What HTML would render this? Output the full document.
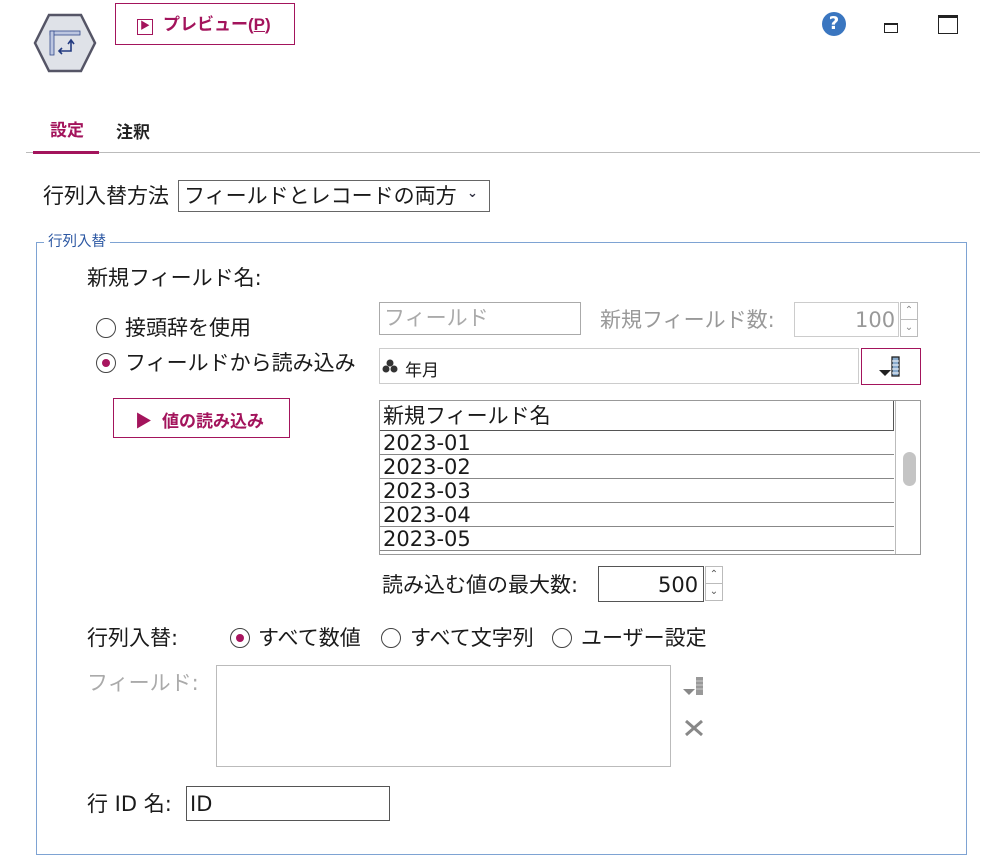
<!DOCTYPE html>
<html><head><meta charset="utf-8"><style>
body{margin:0;width:1000px;height:866px;background:#fff;position:relative;font-family:"DejaVu Sans","Noto Sans CJK JP",sans-serif;color:#1a1a1a;overflow:hidden}
.a{position:absolute;white-space:nowrap}
.t{font-size:21px;line-height:24px}
.g{color:#999}
.box{position:absolute;border:1px solid #aaa;background:#fff;box-sizing:border-box}
.rad{position:absolute;width:20px;height:20px;border:1.5px solid #444;border-radius:50%;box-sizing:border-box;background:#fff}
.rad.on::after{content:"";position:absolute;left:4.5px;top:4.5px;width:8px;height:8px;border-radius:50%;background:#a8155f}
.mag{color:#a3145c}
.spin{position:absolute;width:18px;border:1px solid #bbb;box-sizing:border-box;font-size:10px;color:#555;text-align:center;line-height:16px}
.row{position:absolute;left:0;width:514px;height:24px;border-bottom:1px solid #888;font-size:21px;line-height:24px;padding-left:3px;box-sizing:border-box}
</style></head><body>
<svg class="a" style="left:33px;top:13px" width="64" height="60" viewBox="0 0 64 60">
<polygon points="16,2 48,2 62,30 48,58 16,58 2,30" fill="#dfe2e8" stroke="#556" stroke-width="2.5"/>
<rect x="17" y="18" width="30" height="4" fill="#bcc6e0" stroke="#334a8a" stroke-width="0.8"/>
<rect x="17" y="18" width="4" height="24" fill="#bcc6e0" stroke="#334a8a" stroke-width="0.8"/>
<path d="M26 38h12v-10M35 31l3-4 3 4M29 35l-3 3 3 3" stroke="#223a80" stroke-width="1.6" fill="none"/>
</svg>
<div class="box" style="left:115px;top:3px;width:180px;height:42px;border:1.5px solid #a3145c"></div>
<div class="a mag" style="left:137px;top:14px;font-size:17px;font-weight:bold;line-height:22px;font-family:'Liberation Sans','Noto Sans CJK JP',sans-serif"><span style="display:inline-block;width:14px;height:14px;border:1.5px solid #a3145c;font-size:10px;line-height:14px;text-align:center;vertical-align:1px;margin-right:10px">▶</span>プレビュー(<u>P</u>)</div>
<div class="a" style="left:822px;top:12px;width:24px;height:24px;border-radius:50%;background:#3a76c0;color:#fff;font-weight:bold;font-size:18px;line-height:24px;text-align:center">?</div>
<div class="a" style="left:884px;top:23px;width:12px;height:7px;border:1.5px solid #222;border-top-width:2.5px"></div>
<div class="a" style="left:938px;top:15px;width:18px;height:15px;border:1.5px solid #222;border-top-width:3px"></div>
<div class="a mag" style="left:50px;top:116px;font-size:17px;font-weight:bold">設定</div>
<div class="a" style="left:116px;top:118px;font-size:17px;font-weight:bold;color:#222">注釈</div>
<div class="a" style="left:26px;top:152px;width:954px;height:1px;background:#bbb"></div>
<div class="a" style="left:33px;top:151px;width:66px;height:3px;background:#a3145c"></div>
<div class="a t" style="left:43px;top:184px">行列入替方法</div>
<div class="box" style="left:178px;top:180px;width:312px;height:32px;border-color:#666"></div>
<div class="a t" style="left:184px;top:184px">フィールドとレコードの両方</div>
<div class="a" style="left:467px;top:186px;font-size:13px;color:#334;font-weight:bold">⌄</div>
<div class="a" style="left:36px;top:242px;width:931px;height:613px;border:1px solid #7ea3d3;box-sizing:border-box"></div>
<div class="a" style="left:44px;top:233px;background:#fff;padding:0 4px;font-size:14.5px;color:#2d58a3;line-height:18px">行列入替</div>
<div class="a t" style="left:87px;top:266px">新規フィールド名:</div>
<div class="rad" style="left:96px;top:318px"></div>
<div class="a t" style="left:125px;top:316px">接頭辞を使用</div>
<div class="rad on" style="left:96px;top:353px"></div>
<div class="a t" style="left:125px;top:351px">フィールドから読み込み</div>
<div class="box" style="left:379px;top:302px;width:202px;height:33px"></div>
<div class="a t g" style="left:384px;top:306px;color:#aaa">フィールド</div>
<div class="a t g" style="left:600px;top:308px">新規フィールド数:</div>
<div class="box" style="left:794px;top:302px;width:105px;height:35px;border-color:#ccc"></div>
<div class="a t g" style="left:855px;top:308px;color:#999">100</div>
<div class="spin" style="left:900px;top:302px;height:18px;color:#888">⌃</div>
<div class="spin" style="left:900px;top:319px;height:18px;color:#888">⌄</div>
<div class="box" style="left:379px;top:348px;width:480px;height:36px;border-color:#ccc"></div>
<svg class="a" style="left:382px;top:359px" width="16" height="14"><circle cx="8" cy="4" r="3.5" fill="#333"/><circle cx="4" cy="10" r="3.5" fill="#333"/><circle cx="12" cy="10" r="3.5" fill="#333"/></svg>
<div class="a" style="left:405px;top:356px;font-size:17px">年月</div>
<div class="box" style="left:861px;top:348px;width:60px;height:37px;border:1.5px solid #a3145c"></div>
<svg class="a" style="left:878px;top:356px" width="26" height="22"><path d="M1 14h12l-6 6z" fill="#222"/><rect x="14" y="1" width="7" height="19" fill="#8ac" stroke="#222" stroke-width="1.3"/><path d="M14 5h7M14 9h7M14 13h7M14 17h7" stroke="#fff" stroke-width="1"/></svg>
<div class="box" style="left:113px;top:398px;width:177px;height:40px;border:1.5px solid #a3145c"></div>
<div class="a mag" style="left:135px;top:407px;font-size:17px;font-weight:bold;font-family:'Liberation Sans','Noto Sans CJK JP',sans-serif"><span style="margin-right:10px">▶</span>値の読み込み</div>
<div class="box" style="left:379px;top:400px;width:542px;height:155px;border-color:#999;overflow:hidden">
<div class="row" style="top:0;height:30px;border-bottom:1.5px solid #555;border-right:1px solid #555;line-height:30px">新規フィールド名</div>
<div class="row" style="top:30px">2023-01</div>
<div class="row" style="top:54px">2023-02</div>
<div class="row" style="top:78px">2023-03</div>
<div class="row" style="top:102px">2023-04</div>
<div class="row" style="top:126px">2023-05</div>
<div class="row" style="top:150px">2023-06</div>
<div style="position:absolute;left:515px;top:0;width:1px;height:155px;background:#bbb"></div>
<div style="position:absolute;left:523px;top:51px;width:13px;height:34px;border-radius:7px;background:#c4c4c4"></div>
</div>
<div class="a t" style="left:382px;top:573px">読み込む値の最大数:</div>
<div class="box" style="left:598px;top:566px;width:106px;height:36px;border-color:#555"></div>
<div class="a t" style="left:658px;top:573px">500</div>
<div class="spin" style="left:705px;top:566px;height:18px">⌃</div>
<div class="spin" style="left:705px;top:583px;height:18px">⌄</div>
<div class="a t" style="left:87px;top:626px">行列入替:</div>
<div class="rad on" style="left:230px;top:628px"></div>
<div class="a t" style="left:258px;top:626px">すべて数値</div>
<div class="rad" style="left:381px;top:628px"></div>
<div class="a t" style="left:410px;top:626px">すべて文字列</div>
<div class="rad" style="left:552px;top:628px"></div>
<div class="a t" style="left:581px;top:626px">ユーザー設定</div>
<div class="a t g" style="left:87px;top:671px;color:#aaa">フィールド:</div>
<div class="box" style="left:216px;top:665px;width:455px;height:102px;border-color:#bbb"></div>
<svg class="a" style="left:682px;top:676px" width="24" height="22"><path d="M1 13h12l-6 6z" fill="#888"/><rect x="14" y="1" width="7" height="18" fill="#999"/><path d="M14 5h7M14 9h7M14 13h7" stroke="#ccc"/></svg>
<svg class="a" style="left:683px;top:718px" width="22" height="20"><path d="M3 3l16 14M19 3L3 17" stroke="#888" stroke-width="3"/></svg>
<div class="a t" style="left:87px;top:792px">行 ID 名:</div>
<div class="box" style="left:186px;top:786px;width:204px;height:35px;border-color:#555"></div>
<div class="a t" style="left:190px;top:792px">ID</div>
</body></html>
